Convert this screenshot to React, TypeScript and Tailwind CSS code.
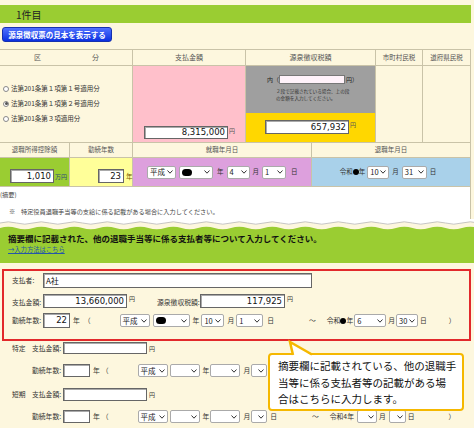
import React from 'react';

// 小さな▼（セレクトの矢印）
const Chev = () => (
  <svg width="6" height="4" viewBox="0 0 6 4" className="shrink-0">
    <polyline points="0.5,0.5 3,3.2 5.5,0.5" fill="none" stroke="#333" strokeWidth="1" />
  </svg>
);

const Sel = ({ className = '', children }: { className?: string; children?: React.ReactNode }) => (
  <div
    className={`flex h-[13px] shrink-0 items-center justify-between gap-[1px] whitespace-nowrap rounded-[2px] border border-[#aaa] bg-white px-[2px] text-[7.5px] leading-none text-[#222] ${className}`}
  >
    <span className="flex items-center">{children}</span>
    <Chev />
  </div>
);

const Box = ({ className = '', left = false, children }: { className?: string; left?: boolean; children?: React.ReactNode }) => (
  <div
    className={`flex shrink-0 items-center border border-[#666] bg-white px-[2px] font-['DejaVu_Sans',sans-serif] text-[8.5px] leading-none text-[#111] shadow-[inset_1px_1px_0_#aaa] ${
      left ? 'justify-start' : 'justify-end'
    } ${className}`}
  >
    {children}
  </div>
);

const Dot = () => <span className="inline-block h-[7px] w-[10px] rounded-full bg-black" />;
const SmallDot = () => <span className="inline-block h-[6px] w-[6px] rounded-full bg-black" />;

const Radio = ({ on = false, label }: { on?: boolean; label: string }) => (
  <div className="flex h-[15px] items-center gap-[2px] pl-[3px] text-[6.5px] text-[#333]">
    <span className="flex h-[6px] w-[6px] items-center justify-center rounded-full border border-[#888] bg-white">
      {on && <span className="h-[3px] w-[3px] rounded-full bg-[#555]" />}
    </span>
    {label}
  </div>
);

// 波形の切れ目
const wave = (y: number, amp: number, period: number) => {
  let d = '';
  for (let x = 0; x < 490; x += period) {
    d += ` Q${x + period / 4} ${y - amp} ${x + period / 2} ${y} Q${x + (period * 3) / 4} ${y + amp} ${x + period} ${y}`;
  }
  return d;
};

const cell = 'border-b border-r border-[#c9c3a8]';

export default function App() {
  return (
    <div className="relative h-[428px] w-[474px] overflow-hidden bg-[#fdf7de] font-['Noto_Sans_CJK_JP',sans-serif] text-[#333]">
      <div className="h-[5px]" />
      <div className="flex h-[18px] w-[471px] items-center bg-[#9acd32] pl-[16px] text-[10px] text-[#222]">1件目</div>
      <div className="pl-[2px] pt-[4px]">
        <button className="flex h-[15px] w-[110px] items-center justify-center rounded-[3px] border border-[#1530b0] bg-gradient-to-b from-[#5070ff] to-[#0a2ee0] text-[7.5px] font-bold text-white">
          源泉徴収票の見本を表示する
        </button>
      </div>

      {/* 上段の表 */}
      <div className="mt-[7px] w-[471px] border-t border-[#c9c3a8]">
        <div className="grid grid-cols-[133px_113px_130px_47px_48px] text-[7px] text-[#555]">
          <div className={`${cell} flex h-[16px] items-center justify-between pl-[34px] pr-[33px]`}>
            <span>区</span>
            <span>分</span>
          </div>
          <div className={`${cell} flex h-[16px] items-center justify-center`}>支払金額</div>
          <div className={`${cell} flex h-[16px] items-center justify-center`}>源泉徴収税額</div>
          <div className={`${cell} flex h-[16px] items-center justify-center text-[6.5px]`}>市町村民税</div>
          <div className={`${cell} flex h-[16px] items-center justify-center text-[6.5px]`}>道府県民税</div>

          <div className={`${cell} h-[77px] pt-[15px]`}>
            <Radio label="法第201条第１項第１号適用分" />
            <Radio on label="法第201条第１項第２号適用分" />
            <Radio label="法第201条第３項適用分" />
          </div>
          <div className={`${cell} flex h-[77px] items-end bg-[#ffc0cb] pb-[3px] pl-[11px]`}>
            <div className="flex items-start">
              <Box className="h-[13px] w-[84px]">8,315,000</Box>
              <span className="ml-[1px] text-[6px]">円</span>
            </div>
          </div>
          <div className={`${cell} flex h-[77px] flex-col`}>
            <div className="h-[47px] bg-[#9f9f9f] pl-[21px] pt-[9px] text-[#222]">
              <div className="flex items-center text-[6px]">
                <span>内（</span>
                <div className="h-[9px] w-[66px] border border-[#777] bg-[#fff2fa]" />
                <span className="ml-[1px]">円）</span>
              </div>
              <div className="mt-[4px] pl-[9px] text-[4.6px] leading-[7px] text-[#333]">
                <div>２段で記載されている場合、上の段</div>
                <div>の金額を入力してください。</div>
              </div>
            </div>
            <div className="flex flex-1 items-start bg-[#ffd700] pl-[19px] pt-[7px]">
              <Box className="h-[14px] w-[84px]">657,932</Box>
              <span className="ml-[1px] text-[6px]">円</span>
            </div>
          </div>
          <div className={`${cell} h-[77px]`} />
          <div className={`${cell} h-[77px]`} />
        </div>

        <div className="grid grid-cols-[70px_63px_179px_159px] text-[7px] text-[#555]">
          <div className={`${cell} flex h-[15px] items-center justify-center text-[6.5px]`}>退職所得控除額</div>
          <div className={`${cell} flex h-[15px] items-center justify-center text-[6.5px]`}>勤続年数</div>
          <div className={`${cell} flex h-[15px] items-center justify-center text-[6.5px]`}>就職年月日</div>
          <div className={`${cell} flex h-[15px] items-center justify-center text-[6.5px]`}>退職年月日</div>

          <div className={`${cell} flex h-[29px] items-start bg-[#9acd32] pl-[10px] pt-[11px]`}>
            <Box className="h-[14px] w-[44px]">1,010</Box>
            <span className="ml-[1px] mt-[3px] text-[6px] text-[#2a4a7a]">万円</span>
          </div>
          <div className={`${cell} flex h-[29px] items-start bg-[#ffff99] pl-[28px] pt-[11px]`}>
            <Box className="h-[14px] w-[26px]">23</Box>
            <span className="ml-[2px] mt-[3px] text-[6.5px] text-[#7a5a00]">年</span>
          </div>
          <div className={`${cell} flex h-[29px] items-center bg-[#dda0dd] pl-[14px] text-[6.5px] text-[#333]`}>
            <Sel className="w-[29px]">平成</Sel>
            <Sel className="ml-[3px] w-[34px]">
              <Dot />
            </Sel>
            <span className="ml-[4px]">年</span>
            <Sel className="ml-[3px] w-[23px]">4</Sel>
            <span className="ml-[3px]">月</span>
            <Sel className="ml-[3px] w-[24px]">1</Sel>
            <span className="ml-[5px]">日</span>
          </div>
          <div className={`${cell} flex h-[29px] items-center justify-center bg-[#a9d1ea] pr-[6px] text-[6.5px] text-[#333]`}>
            <span className="flex items-center">
              令和
              <SmallDot />年
            </span>
            <Sel className="ml-[2px] w-[22px]">10</Sel>
            <span className="ml-[3px]">月</span>
            <Sel className="ml-[3px] w-[25px]">31</Sel>
            <span className="ml-[3px]">日</span>
          </div>
        </div>
      </div>

      {/* 摘要 */}
      <div className="h-[32px] w-[471px] border-r border-[#c9c3a8] bg-white text-[6.2px] text-[#444]">
        <div className="pt-[3px]">(摘要)</div>
        <div className="mt-[8px] flex pl-[9px]">
          <span className="w-[12px]">※</span>
          <span>特定役員退職手当等の支給に係る記載がある場合に入力してください。</span>
        </div>
      </div>

      <svg width="474" height="12" viewBox="0 0 474 12" className="block">
        <path d={`M0 0 L0 4${wave(4, 2.4, 33)} L490 0 Z`} fill="#ffffff" />
        <path d={`M0 4${wave(4, 2.4, 33)}`} fill="none" stroke="#b8b8b8" strokeWidth="0.8" />
        <path d={`M0 9${wave(9, 2.4, 33)} L490 12 L0 12 Z`} fill="#9acd32" />
      </svg>

      {/* 他の支払者 */}
      <div className="h-[32px] bg-[#9acd32] pl-[8px] pt-[1px]">
        <div className="text-[8.5px] font-bold leading-[12px] text-[#111]">
          摘要欄に記載された、他の退職手当等に係る支払者等について入力してください。
        </div>
        <div className="mt-[1px] text-[6.3px] leading-[9px] text-[#2456a8] underline">→入力方法はこちら</div>
      </div>

      <div className="ml-[2px] mt-[6px] h-[72px] w-[469px] border-2 border-[#e2292b] pl-[8px] text-[6.8px] text-[#333]">
        <div className="mt-[2px] flex h-[15px] items-center">
          <span className="w-[31px]">支払者:</span>
          <Box left className="h-[15px] w-[269px] font-['Noto_Sans_CJK_JP',sans-serif] text-[8px]">
            A社
          </Box>
        </div>
        <div className="mt-[6px] flex h-[14px] items-start">
          <span className="mt-[3px] w-[31px]">支払金額:</span>
          <Box className="h-[14px] w-[84px]">13,660,000</Box>
          <span className="ml-[2px] text-[6px]">円</span>
          <span className="ml-[22px] mt-[3px] w-[43px]">源泉徴収税額:</span>
          <Box className="h-[14px] w-[85px]">117,925</Box>
          <span className="ml-[2px] text-[6px]">円</span>
        </div>
        <div className="mt-[5px] flex h-[15px] items-center">
          <span className="w-[31px]">勤続年数:</span>
          <Box className="h-[15px] w-[27px]">22</Box>
          <span className="ml-[3px]">年</span>
          <span className="ml-[4px]">（</span>
          <Sel className="ml-[29px] w-[30px]">平成</Sel>
          <Sel className="ml-[3px] w-[37px]">
            <Dot />
          </Sel>
          <span className="ml-[3px]">年</span>
          <Sel className="ml-[2px] w-[23px]">10</Sel>
          <span className="ml-[3px]">月</span>
          <Sel className="ml-[2px] w-[27px]">1</Sel>
          <span className="ml-[4px]">日</span>
          <span className="ml-[35px]">～</span>
          <span className="ml-[11px] flex items-center">
            令和
            <SmallDot />年
          </span>
          <Sel className="ml-[1px] w-[32px]">6</Sel>
          <span className="ml-[2px]">月</span>
          <Sel className="ml-[1px] w-[22px]">30</Sel>
          <span className="ml-[2px]">日</span>
          <span className="ml-[22px]">）</span>
        </div>
      </div>

      <div className="pl-[12px] text-[6.8px] text-[#333]">
        <div className="mt-[1px] flex h-[12px] items-center">
          <span className="w-[20px]">特定</span>
          <span className="w-[31px]">支払金額:</span>
          <Box className="h-[12px] w-[84px]" />
          <span className="ml-[2px] text-[6px]">円</span>
        </div>
        <div className="mt-[10px] flex h-[13px] items-center pl-[20px]">
          <span className="w-[31px]">勤続年数:</span>
          <Box className="h-[13px] w-[27px]" />
          <span className="ml-[3px]">年</span>
          <span className="ml-[2px]">（</span>
          <Sel className="ml-[29px] w-[30px]">平成</Sel>
          <Sel className="ml-[2px] w-[30px]" />
          <span className="ml-[3px]">年</span>
          <Sel className="ml-[1px] w-[30px]" />
          <span className="ml-[3px]">月</span>
          <Sel className="ml-[1px] w-[16px]" />
        </div>
        <div className="mt-[11px] flex h-[13px] items-center">
          <span className="w-[20px]">短期</span>
          <span className="w-[31px]">支払金額:</span>
          <Box className="h-[13px] w-[84px]" />
          <span className="ml-[2px] text-[6px]">円</span>
        </div>
        <div className="mt-[9px] flex h-[13px] items-center pl-[20px]">
          <span className="w-[31px]">勤続年数:</span>
          <Box className="h-[13px] w-[27px]" />
          <span className="ml-[3px]">年</span>
          <span className="ml-[2px]">（</span>
          <Sel className="ml-[29px] w-[30px]">平成</Sel>
          <Sel className="ml-[2px] w-[30px]" />
          <span className="ml-[3px]">年</span>
          <Sel className="ml-[1px] w-[30px]" />
          <span className="ml-[3px]">月</span>
          <Sel className="ml-[1px] w-[16px]" />
          <span className="ml-[3px]">日</span>
          <span className="ml-[35px]">～</span>
          <span className="ml-[11px]">令和4年</span>
          <Sel className="ml-[3px] w-[20px]" />
          <span className="ml-[2px]">月</span>
          <Sel className="ml-[3px] w-[17px]" />
          <span className="ml-[2px]">日</span>
          <span className="ml-[34px]">）</span>
        </div>
      </div>

      {/* 吹き出し */}
      <div className="absolute left-[268px] top-[353px] h-[58px] w-[196px] rounded-[4px] border-[2.5px] border-[#f5b800] bg-white pl-[8px] pt-[3px] text-[10.5px] leading-[16.5px] text-[#111]">
        <div>摘要欄に記載されている、他の退職手</div>
        <div>当等に係る支払者等の記載がある場</div>
        <div>合はこちらに入力します。</div>
      </div>
      <svg width="40" height="20" viewBox="0 0 40 20" className="absolute left-[280px] top-[338px]">
        <polygon points="13,19 10,4 34,19" fill="#ffffff" />
        <polyline points="13,17 10,4 32,16.5" fill="none" stroke="#f5b800" strokeWidth="2.5" strokeLinejoin="miter" />
      </svg>
    </div>
  );
}
